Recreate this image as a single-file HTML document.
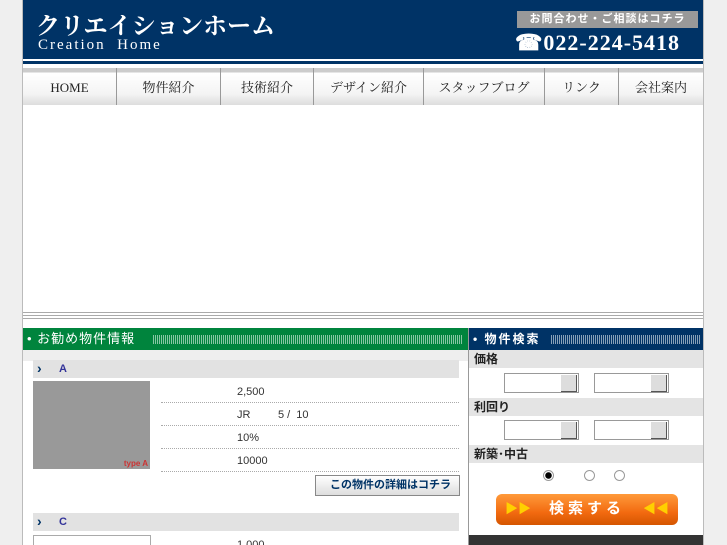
<!DOCTYPE html>
<html><head><meta charset="utf-8"><style>
*{margin:0;padding:0;box-sizing:border-box}
html,body{width:727px;height:545px;overflow:hidden}
body{background:#efefef;font-family:"Liberation Sans","Noto Sans CJK JP",sans-serif;position:relative}
.wrap{position:absolute;left:22px;top:0;width:682px;height:545px;background:#fff;border-left:1px solid #bbb;border-right:1px solid #bbb;overflow:hidden}
.hdr{position:absolute;left:0;top:0;width:680px;height:59px;background:#003366}
.hline{position:absolute;left:0;top:61px;width:680px;height:3px;background:#003366}
.logo{position:absolute;left:13px;top:6px;color:#fff;font-family:"Noto Serif CJK SC","Liberation Serif",serif;font-weight:bold;font-size:24px;letter-spacing:0px}
.logo2{position:absolute;left:15px;top:37px;color:#fff;font-family:"Liberation Serif",serif;font-size:15px;letter-spacing:2px}
.cnt{position:absolute;left:494px;top:11px;width:181px;height:17px;background:#999;color:#fff;font-size:11px;font-weight:bold;text-align:center;line-height:17px;letter-spacing:1px}
.tel{position:absolute;left:492px;top:30px;color:#fff;font-family:"Liberation Serif",serif;font-weight:bold;font-size:22px;letter-spacing:1px}
.nav{position:absolute;left:0;top:68px;width:680px;height:37px;display:flex}
.nav div{border-right:1px solid #999;background:linear-gradient(#ccc 0,#ccc 4px,#fff 5px,#f4f4f4 70%,#ddd);text-align:center;line-height:40px;font-size:13px;font-family:"Liberation Serif","Noto Serif CJK SC",serif;color:#222}
.gr{position:absolute;left:0;top:312px;width:680px;height:7px;border-top:1px solid #aaa;border-bottom:1px solid #aaa;background:#fff}
.gr:after{content:"";position:absolute;left:0;top:2px;width:100%;height:1px;background:#aaa}
.lt{position:absolute;left:0;top:328px;width:445px;height:22px;background:#00843d;color:#fff;font-size:13px;line-height:22px;padding-left:4px;letter-spacing:1px}
.stripe{position:absolute;top:7px;height:9px;background:repeating-linear-gradient(90deg,#ffffff88 0 1px,transparent 1px 2px)}
.rt{position:absolute;left:446px;top:328px;width:235px;height:22px;background:#003366;color:#fff;font-size:12px;font-weight:bold;line-height:22px;padding-left:4px;letter-spacing:2px}
.lbg{position:absolute;left:0;top:350px;width:445px;height:11px;background:#eee}
.bar{position:absolute;left:10px;width:426px;height:18px;background:#e2e2e2;font-size:11px;font-weight:bold;color:#339;line-height:18px;padding-left:26px}
.bar:before{content:"›";position:absolute;left:4px;top:-1px;color:#036;font-size:14px}
.img{position:absolute;left:10px;top:381px;width:117px;height:88px;background:#999}
.img span{position:absolute;right:2px;bottom:1px;color:#c33;font-size:8px;font-weight:bold}
.row{position:absolute;left:138px;width:298px;height:22px;border-bottom:1px dotted #aaa;font-size:11px;color:#333;line-height:22px;padding-left:76px}
.btn{position:absolute;left:292px;top:475px;width:145px;height:21px;border:1px solid #888;background:linear-gradient(#fff,#ddd);font-size:11px;font-weight:bold;color:#036;line-height:19px;padding-left:14px}
.sep{position:absolute;left:445px;top:328px;width:1px;height:217px;background:#999}
.rl{position:absolute;left:446px;width:235px;height:18px;background:#e4e4e4;font-size:12px;font-weight:bold;color:#222;line-height:18px;padding-left:5px}
.sel{position:absolute;width:75px;height:20px;border:1px solid #999;background:#fff}
.sel:after{content:"";position:absolute;right:1px;top:1px;width:15px;height:16px;background:#ddd;border-right:1px solid #555;border-bottom:1px solid #555}
.rad{position:absolute;width:11px;height:11px;border-radius:50%;border:1px solid #999;background:#fff;top:470px}
.sb{position:absolute;left:473px;top:494px;width:182px;height:31px;border-radius:6px;background:linear-gradient(#ff9a3a,#f26a10 60%,#d45500);color:#fff;font-size:15px;font-weight:bold;text-align:center;line-height:30px;letter-spacing:4px}
.sb i{position:absolute;top:0;font-style:normal;color:#ffd000;font-size:13px;letter-spacing:0}
.bt{position:absolute;left:446px;top:535px;width:235px;height:12px;background:#333}
</style></head><body>
<div class="wrap">
<div class="hdr"></div><div class="hline"></div>
<div class="logo">クリエイションホーム</div>
<div class="logo2">Creation&nbsp; Home</div>
<div class="cnt">お問合わせ・ご相談はコチラ</div>
<div class="tel">☎022-224-5418</div>
<div class="nav">
<div style="width:94px">HOME</div><div style="width:104px">物件紹介</div><div style="width:93px">技術紹介</div><div style="width:110px">デザイン紹介</div><div style="width:121px">スタッフブログ</div><div style="width:74px">リンク</div><div style="width:84px;border-right:0">会社案内</div>
</div>
<div class="gr"></div>
<div class="lt">• お勧め物件情報<div class="stripe" style="left:130px;width:310px"></div></div>
<div class="rt">• 物件検索<div class="stripe" style="left:82px;width:150px"></div></div>
<div class="sep"></div>
<div class="lbg"></div>
<div class="bar" style="top:360px">A</div>
<div class="img"><span>type A</span></div>
<div class="row" style="top:381px">2,500</div>
<div class="row" style="top:404px">JR &nbsp;&nbsp;&nbsp;&nbsp;&nbsp;&nbsp;&nbsp; 5 /&nbsp; 10</div>
<div class="row" style="top:427px">10%</div>
<div class="row" style="top:450px">10000</div>
<div class="btn">この物件の詳細はコチラ</div>
<div class="bar" style="top:513px">C</div>
<div style="position:absolute;left:10px;top:535px;width:118px;height:12px;border:1px solid #aaa;border-bottom:0"></div>
<div class="row" style="top:534px;border:0">1,000</div>
<div class="rl" style="top:350px">価格</div>
<div class="sel" style="left:481px;top:373px"></div><div class="sel" style="left:571px;top:373px"></div>
<div class="rl" style="top:398px">利回り</div>
<div class="sel" style="left:481px;top:420px"></div><div class="sel" style="left:571px;top:420px"></div>
<div class="rl" style="top:445px">新築･中古</div>
<div class="rad" style="left:520px;background:radial-gradient(#000 0 3px,#fff 3.5px)"></div>
<div class="rad" style="left:561px"></div><div class="rad" style="left:591px"></div>
<div class="sb"><i style="left:9px">▶▶</i>検索する<i style="right:9px">◀◀</i></div>
<div class="bt"></div>
</div>
</body></html>
